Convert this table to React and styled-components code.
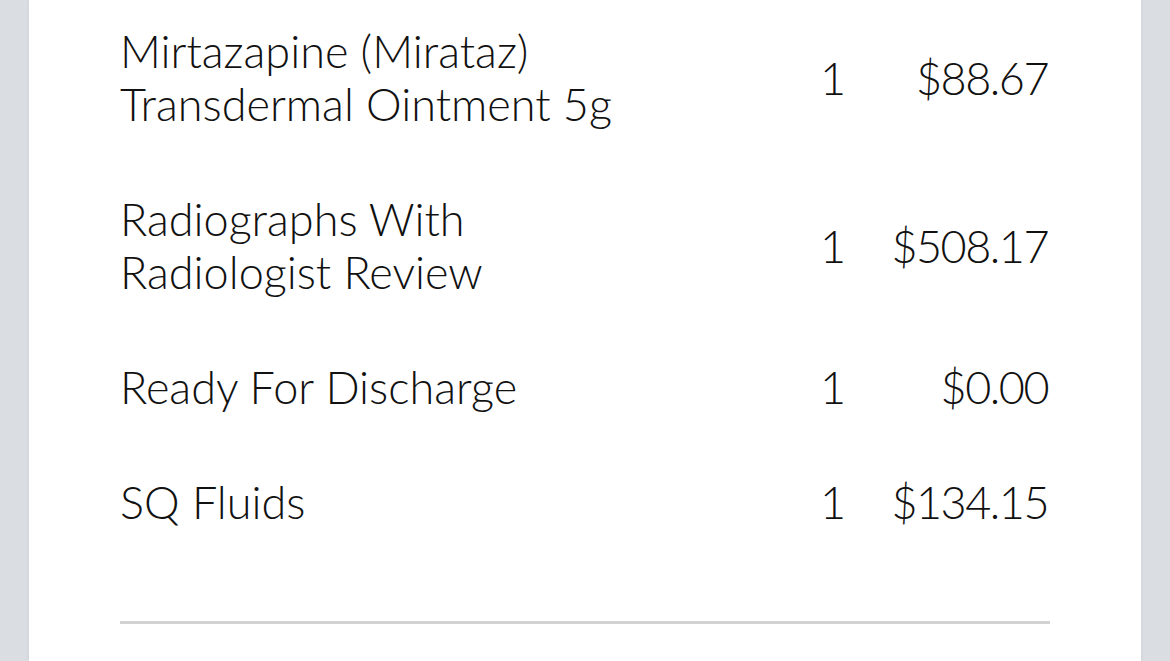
import React from "react";
import styled, { createGlobalStyle } from "styled-components";

const Global = createGlobalStyle`
  html, body {
    margin: 0;
    padding: 0;
    background: #dadee2;
    height: 100%;
    overflow: hidden;
  }
  #root { height: 100%; }
`;

const Page = styled.div`
  height: 100%;
  padding: 0 29px;
  box-sizing: border-box;
`;

const Card = styled.div`
  background: #ffffff;
  height: 100%;
  box-sizing: border-box;
  padding: 25px 91px 0 91px;
  box-shadow: 0 0 3px rgba(0, 0, 0, 0.08);
  font-family: "Lato", "Liberation Sans", sans-serif;
  font-weight: 300;
  color: #111111;
`;

const List = styled.div`
  display: flex;
  flex-direction: column;
  gap: 62px;
`;

const Row = styled.div`
  display: grid;
  grid-template-columns: 1fr 60px 187px;
  align-items: center;
  font-size: 45px;
  line-height: 53px;
`;

const Name = styled.div`
  white-space: pre-line;
`;

const Qty = styled.div`
  text-align: center;
`;

const Price = styled.div`
  text-align: right;
  letter-spacing: -1.5px;
  margin-right: 2px;
`;

const Divider = styled.hr`
  margin: 92px 0 0 0;
  border: none;
  height: 3px;
  background: #d2d2d2;
`;

const items = [
  { name: "Mirtazapine (Mirataz)\nTransdermal Ointment 5g", qty: 1, price: "$88.67" },
  { name: "Radiographs With\nRadiologist Review", qty: 1, price: "$508.17" },
  { name: "Ready For Discharge", qty: 1, price: "$0.00" },
  { name: "SQ Fluids", qty: 1, price: "$134.15" },
];

export default function App() {
  return (
    <>
      <Global />
      <Page>
        <Card>
          <List>
            {items.map((it) => (
              <Row key={it.name}>
                <Name>{it.name}</Name>
                <Qty>{it.qty}</Qty>
                <Price>{it.price}</Price>
              </Row>
            ))}
          </List>
          <Divider />
        </Card>
      </Page>
    </>
  );
}
